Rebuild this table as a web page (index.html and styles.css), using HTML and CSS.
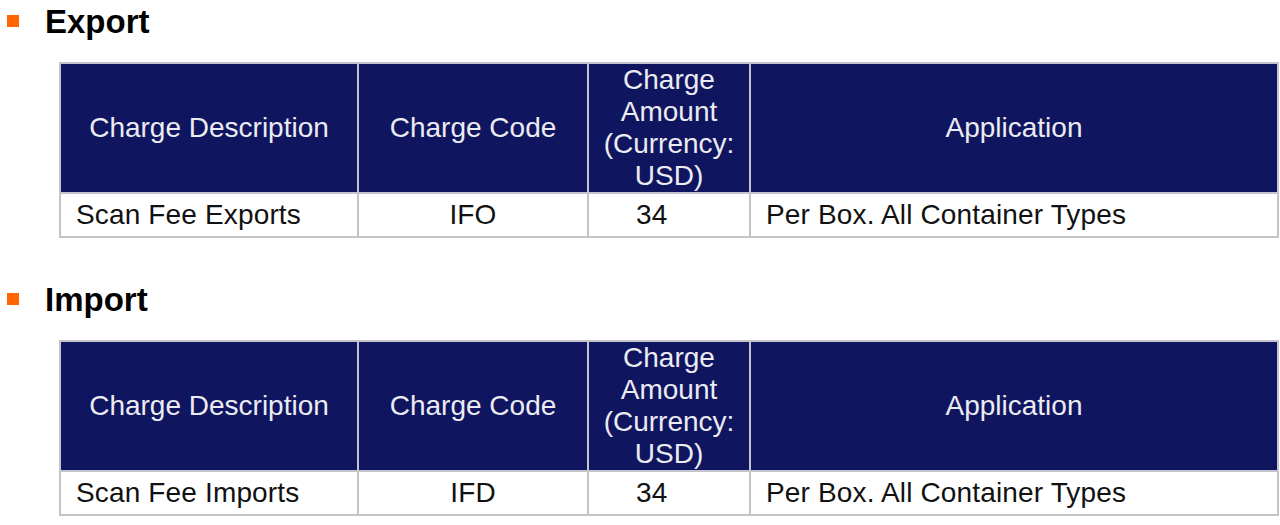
FILE: index.html
```html
<!DOCTYPE html>
<html lang="en">
<head>
<meta charset="utf-8">
<title>Charges</title>
<link rel="stylesheet" href="styles.css">
</head>
<body>
<section class="section">
  <h2 class="heading"><span class="bullet"></span>Export</h2>
  <table class="charges">
    <colgroup>
      <col class="c1"><col class="c2"><col class="c3"><col class="c4">
    </colgroup>
    <thead>
      <tr>
        <th>Charge Description</th>
        <th>Charge Code</th>
        <th>Charge<br>Amount<br>(Currency:<br>USD)</th>
        <th>Application</th>
      </tr>
    </thead>
    <tbody>
      <tr>
        <td class="left">Scan Fee Exports</td>
        <td class="center">IFO</td>
        <td class="amount">34</td>
        <td class="left">Per Box. All Container Types</td>
      </tr>
    </tbody>
  </table>
</section>
<section class="section second">
  <h2 class="heading"><span class="bullet"></span>Import</h2>
  <table class="charges">
    <colgroup>
      <col class="c1"><col class="c2"><col class="c3"><col class="c4">
    </colgroup>
    <thead>
      <tr>
        <th>Charge Description</th>
        <th>Charge Code</th>
        <th>Charge<br>Amount<br>(Currency:<br>USD)</th>
        <th>Application</th>
      </tr>
    </thead>
    <tbody>
      <tr>
        <td class="left">Scan Fee Imports</td>
        <td class="center">IFD</td>
        <td class="amount">34</td>
        <td class="left">Per Box. All Container Types</td>
      </tr>
    </tbody>
  </table>
</section>
</body>
</html>
```

FILE: styles.css
```css
html, body {
  margin: 0;
  padding: 0;
  background: #ffffff;
}

body {
  font-family: "Liberation Sans", Arial, sans-serif;
  color: #111111;
  padding-top: 4px;
}

.section.second {
  margin-top: 44px;
}

.heading {
  display: flex;
  align-items: center;
  margin: 0;
  height: 36px;
  line-height: 36px;
  font-size: 33px;
  font-weight: bold;
  color: #000000;
}

.bullet {
  display: block;
  width: 12px;
  height: 12px;
  background: #ff6600;
  margin-left: 7px;
  margin-right: 26px;
  margin-top: -3px;
}

.charges {
  margin: 22px 0 0 59px;
  border-collapse: collapse;
  table-layout: fixed;
  width: 1218px;
  font-size: 28px;
  line-height: 32px;
  border: 2px solid #c4c4c4;
}

.c1 { width: 298px; }
.c2 { width: 230px; }
.c3 { width: 162px; }
.c4 { width: 528px; }

.charges th {
  background: #10155f;
  color: #ebebf2;
  font-weight: normal;
  text-align: center;
  vertical-align: middle;
  height: 128px;
  padding: 0;
  border: 2px solid #c4c4cc;
}

.charges td {
  padding: 5px 0 5px 0;
  border: 2px solid #c4c4c4;
  white-space: nowrap;
  letter-spacing: 0.15px;
}

.charges td.left {
  padding-left: 15px;
}

.charges td.center {
  text-align: center;
}

.charges td.amount {
  padding-left: 47px;
}
```
